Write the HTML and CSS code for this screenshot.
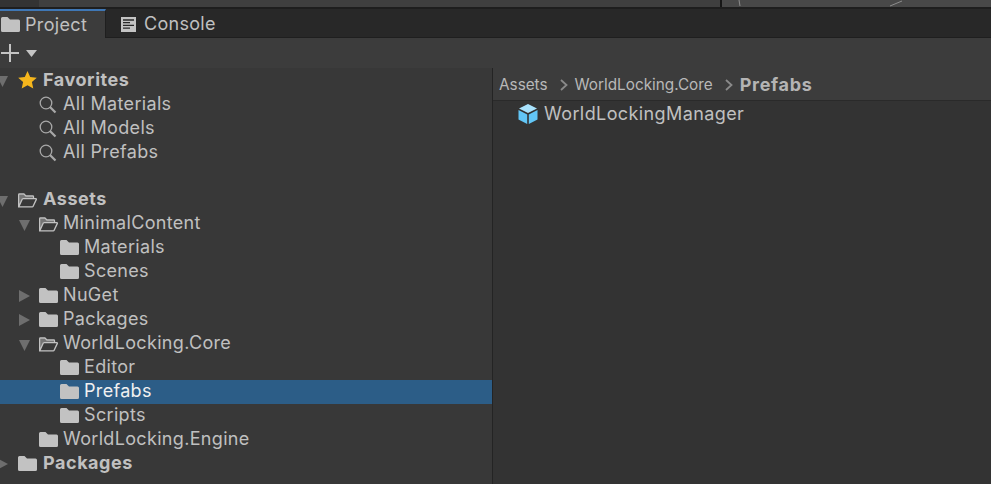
FILE: index.html
```html
<!DOCTYPE html>
<html lang="en">
<head>
<meta charset="utf-8">
<title>Project</title>
<link rel="stylesheet" href="styles.css">
</head>
<body>
<svg class="defs" width="0" height="0" aria-hidden="true">
  <symbol id="folder" viewBox="0 0 19 18"><path d="M0 2.500Q0 1 1.500 1H6.500L9 3.500H17.500Q19 3.500 19 5V14.500Q19 16 17.500 16H1.500Q0 16 0 14.500Z" fill="#c2c2c2"/></symbol>
  <symbol id="open" viewBox="0 0 20 18"><path d="M.7 16.300V3.400Q.7 2.700 1.400 2.700H6.200L8.300 4.800H15.500Q16.300 4.800 16.300 5.600V7.600M.7 16.300L4.400 8.200Q4.700 7.600 5.400 7.600H18.600Q19.700 7.600 19.200 8.600L15.800 15.900Q15.600 16.300 15 16.300Z" fill="none" stroke="#c2c2c2" stroke-width="1.400"/><path d="M1.200 15.800V3.200H6L8 5.400H15.600V7H4.600Z" fill="#c2c2c2" fill-opacity=".45"/></symbol>
  <symbol id="search" viewBox="0 0 18 18"><circle cx="7" cy="7" r="5.800" fill="none" stroke="#a8a8a8" stroke-width="1.300"/><path d="M11 11L16.500 16.500" stroke="#a8a8a8" stroke-width="2.200"/></symbol>
</svg>

<div class="top-strip">
  <div class="strip-left"></div>
  <div class="strip-mid"></div>
  <div class="strip-right">
    <svg width="269" height="7" viewBox="0 0 269 7"><path d="M17 0L18 6M168 6L180 1" fill="none" stroke="#8c8c8c"/></svg>
  </div>
</div>

<nav class="tabs">
  <div class="tab tab-active">
    <svg class="tab-icon" width="19" height="18"><use href="#folder"/></svg>
    <span>Project</span>
  </div>
  <div class="tab">
    <svg class="tab-icon" width="15" height="15" viewBox="0 0 15 15"><path d="M0 0H15V15H0Z" fill="#c4c4c4"/><path d="M2 3H13M2 5.700H9M2 8.400H13M2 11.200H9" stroke="#282828" stroke-width="1.300"/></svg>
    <span>Console</span>
  </div>
</nav>

<div class="toolbar">
  <svg width="18" height="18" viewBox="0 0 18 18"><path d="M9 0V18M0 9H18" stroke="#c4c4c4" stroke-width="2"/></svg>
  <svg width="11" height="7" viewBox="0 0 11 7"><path d="M0 0H11L5.500 7Z" fill="#c4c4c4"/></svg>
</div>

<main class="panes">
  <section class="tree">
    <div class="row root fav"><svg class="arrow down" width="11" height="11" viewBox="0 0 11 11"><path d="M0 0H11L5.500 11Z" fill="#6e6e6e"/></svg>
      <svg class="icon" width="19" height="18" viewBox="0 0 19 18"><path d="M9.500 0L12.200 6 18.800 6.700 13.900 11.100 15.300 17.600 9.500 14.300 3.700 17.600 5.100 11.100 .2 6.700 6.800 6Z" fill="#f5b61c"/></svg>
      <b>Favorites</b></div>
    <div class="row search-row fav"><svg class="icon lens" width="18" height="18"><use href="#search"/></svg><span>All Materials</span></div>
    <div class="row search-row fav"><svg class="icon lens" width="18" height="18"><use href="#search"/></svg><span>All Models</span></div>
    <div class="row search-row fav"><svg class="icon lens" width="18" height="18"><use href="#search"/></svg><span>All Prefabs</span></div>
    <div class="row"></div>
    <div class="row root"><svg class="arrow down" width="11" height="11" viewBox="0 0 11 11"><path d="M0 0H11L5.500 11Z" fill="#6e6e6e"/></svg>
      <svg class="icon" width="19" height="18"><use href="#open"/></svg><b>Assets</b></div>
    <div class="row depth-1"><svg class="arrow down" width="11" height="11" viewBox="0 0 11 11"><path d="M0 0H11L5.500 11Z" fill="#6e6e6e"/></svg>
      <svg class="icon" width="19" height="18"><use href="#open"/></svg><span>MinimalContent</span></div>
    <div class="row depth-2"><svg class="icon" width="19" height="18"><use href="#folder"/></svg><span>Materials</span></div>
    <div class="row depth-2"><svg class="icon" width="19" height="18"><use href="#folder"/></svg><span>Scenes</span></div>
    <div class="row depth-1"><svg class="arrow" width="11" height="12" viewBox="0 0 11 12"><path d="M0 0L11 6L0 12Z" fill="#6e6e6e"/></svg>
      <svg class="icon" width="19" height="18"><use href="#folder"/></svg><span>NuGet</span></div>
    <div class="row depth-1"><svg class="arrow" width="11" height="12" viewBox="0 0 11 12"><path d="M0 0L11 6L0 12Z" fill="#6e6e6e"/></svg>
      <svg class="icon" width="19" height="18"><use href="#folder"/></svg><span>Packages</span></div>
    <div class="row depth-1"><svg class="arrow down" width="11" height="11" viewBox="0 0 11 11"><path d="M0 0H11L5.500 11Z" fill="#6e6e6e"/></svg>
      <svg class="icon" width="19" height="18"><use href="#open"/></svg><span>WorldLocking.Core</span></div>
    <div class="row depth-2"><svg class="icon" width="19" height="18"><use href="#folder"/></svg><span>Editor</span></div>
    <div class="row depth-2 selected"><svg class="icon" width="19" height="18"><use href="#folder"/></svg><span>Prefabs</span></div>
    <div class="row depth-2"><svg class="icon" width="19" height="18"><use href="#folder"/></svg><span>Scripts</span></div>
    <div class="row no-arrow"><svg class="icon" width="19" height="18"><use href="#folder"/></svg><span>WorldLocking.Engine</span></div>
    <div class="row root"><svg class="arrow" width="11" height="12" viewBox="0 0 11 12"><path d="M0 0L11 6L0 12Z" fill="#6e6e6e"/></svg>
      <svg class="icon" width="19" height="18"><use href="#folder"/></svg><b>Packages</b></div>
  </section>

  <section class="content">
    <div class="crumbs">
      <span>Assets</span>
      <svg class="chev" width="8" height="12" viewBox="0 0 8 12"><path d="M1 1L6.500 6L1 11" fill="none" stroke="#8a8a8a" stroke-width="1.800"/></svg>
      <span>WorldLocking.Core</span>
      <svg class="chev" width="8" height="12" viewBox="0 0 8 12"><path d="M1 1L6.500 6L1 11" fill="none" stroke="#8a8a8a" stroke-width="1.800"/></svg>
      <b>Prefabs</b>
    </div>
    <div class="asset">
      <svg width="20" height="20" viewBox="0 0 20 20"><path d="M10 0L19 4.600 10 9 1 4.600Z" fill="#a8e2fc"/><path d="M.5 6L9.200 10.500V20L.5 15.500Z" fill="#62c6f6"/><path d="M19.500 6L10.800 10.500V20L19.500 15.500Z" fill="#62c6f6"/></svg>
      <span>WorldLockingManager</span>
    </div>
  </section>
</main>
</body>
</html>
```

FILE: styles.css
```css
* { box-sizing: border-box; }
html, body { height: 100%; }
body {
  margin: 0;
  overflow: hidden;
  display: flex;
  flex-direction: column;
  background: #383838;
  color: #c0c0c0;
  font: 18px/24px Inter, "Noto Sans", sans-serif;
}
.defs { position: absolute; }
b { font-weight: 700; letter-spacing: .55px; }

.top-strip { height: 9px; flex: none; display: flex; background: #3f3f3f; border-bottom: 2px solid #1e1e1e; }
.strip-left { width: 39px; background: #333; }
.strip-mid { width: 682px; }
.strip-right { flex: 1; background: #484848; border-left: 2px solid #161616; }
.strip-right svg { display: block; }

.tabs { height: 29px; flex: none; display: flex; background: #282828; border-bottom: 1px solid #1f1f1f; }
.tab { display: flex; align-items: center; gap: 8px; padding: 2px 0 0 15px; letter-spacing: .3px; line-height: 26px; }
.tab-active { width: 106px; height: 29px; padding: 0 0 0 1px; gap: 5px; background: #3c3c3c; border-top: 2px solid #3f77b5; border-right: 1px solid #1f1f1f; letter-spacing: .35px; }

.toolbar { height: 30px; flex: none; display: flex; align-items: center; gap: 7px; padding-left: 1px; background: #3c3c3c; }

.panes { flex: 1; min-height: 0; display: flex; }
.tree { width: 493px; flex: none; background: #383838; border-right: 1px solid #242424; }
.row { height: 24px; display: flex; align-items: center; letter-spacing: .33px; white-space: nowrap; }
.row span, .row b { margin-bottom: 2px; }
.row.fav span, .row.fav b { margin-bottom: 0; }
.row.depth-1 { padding-left: 19px; }
.row.depth-2 { padding-left: 60px; }
.row.no-arrow { padding-left: 39px; }
.row.search-row { padding-left: 39px; gap: 1px; }
.arrow { flex: none; margin-right: 9px; }
.arrow.down { margin-top: 2px; }
.row.root .arrow { margin-left: -3px; margin-right: 10px; }
.icon { flex: none; margin-right: 5px; }
.icon.lens { margin-top: 2px; }
.row.root .icon { margin-right: 6px; }
.selected { background: #2c5d87; color: #f0f0f0; }

.content { flex: 1; min-width: 0; background: #333; }
.crumbs { height: 33px; display: flex; align-items: center; gap: 7px; padding: 2px 0 0 6px; background: #3c3c3c; border-bottom: 1px solid #2a2a2a; font-size: 15.300px; }
.crumbs b { font-size: 18px; color: #b4b4b4; letter-spacing: .7px; }
.crumbs span { color: #b8b8b8; }
.crumbs .chev { margin-left: 5px; }
.asset { height: 26px; display: flex; align-items: center; gap: 6px; padding-left: 25px; letter-spacing: .4px; }
```
